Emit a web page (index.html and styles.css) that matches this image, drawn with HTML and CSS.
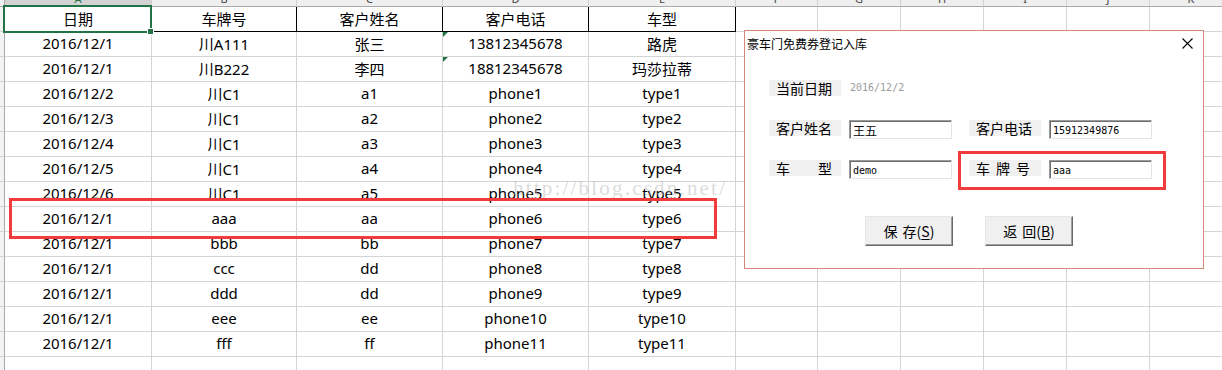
FILE: index.html
```html
<!DOCTYPE html>
<html lang="zh-CN">
<head>
<meta charset="utf-8">
<title>豪车门免费券登记入库</title>
<link rel="stylesheet" href="styles.css">
</head>
<body>
<div class="page">
  <div class="sheet">
    <div class="colhead corner"></div>
    <div class="colhead sel"><span>A</span></div>
    <div class="colhead"><span>B</span></div>
    <div class="colhead"><span>C</span></div>
    <div class="colhead"><span>D</span></div>
    <div class="colhead"><span>E</span></div>
    <div class="colhead"><span>F</span></div>
    <div class="colhead"><span>G</span></div>
    <div class="colhead"><span>H</span></div>
    <div class="colhead"><span>I</span></div>
    <div class="colhead"><span>J</span></div>
    <div class="colhead"><span>K</span></div>

    <div class="rowhead"></div>
    <div class="cell hd active">日期</div><div class="cell hd">车牌号</div><div class="cell hd">客户姓名</div><div class="cell hd">客户电话</div><div class="cell hd">车型</div>
    <div class="cell"></div><div class="cell"></div><div class="cell"></div><div class="cell"></div><div class="cell"></div><div class="cell"></div>

    <div class="rowhead"></div>
    <div class="cell">2016/12/1</div><div class="cell">川A111</div><div class="cell">张三</div><div class="cell flag">13812345678</div><div class="cell">路虎</div>
    <div class="cell"></div><div class="cell"></div><div class="cell"></div><div class="cell"></div><div class="cell"></div><div class="cell"></div>

    <div class="rowhead"></div>
    <div class="cell">2016/12/1</div><div class="cell">川B222</div><div class="cell">李四</div><div class="cell flag">18812345678</div><div class="cell">玛莎拉蒂</div>
    <div class="cell"></div><div class="cell"></div><div class="cell"></div><div class="cell"></div><div class="cell"></div><div class="cell"></div>

    <div class="rowhead"></div>
    <div class="cell">2016/12/2</div><div class="cell">川C1</div><div class="cell">a1</div><div class="cell">phone1</div><div class="cell">type1</div>
    <div class="cell"></div><div class="cell"></div><div class="cell"></div><div class="cell"></div><div class="cell"></div><div class="cell"></div>

    <div class="rowhead"></div>
    <div class="cell">2016/12/3</div><div class="cell">川C1</div><div class="cell">a2</div><div class="cell">phone2</div><div class="cell">type2</div>
    <div class="cell"></div><div class="cell"></div><div class="cell"></div><div class="cell"></div><div class="cell"></div><div class="cell"></div>

    <div class="rowhead"></div>
    <div class="cell">2016/12/4</div><div class="cell">川C1</div><div class="cell">a3</div><div class="cell">phone3</div><div class="cell">type3</div>
    <div class="cell"></div><div class="cell"></div><div class="cell"></div><div class="cell"></div><div class="cell"></div><div class="cell"></div>

    <div class="rowhead"></div>
    <div class="cell">2016/12/5</div><div class="cell">川C1</div><div class="cell">a4</div><div class="cell">phone4</div><div class="cell">type4</div>
    <div class="cell"></div><div class="cell"></div><div class="cell"></div><div class="cell"></div><div class="cell"></div><div class="cell"></div>

    <div class="rowhead"></div>
    <div class="cell">2016/12/6</div><div class="cell">川C1</div><div class="cell">a5</div><div class="cell">phone5</div><div class="cell">type5</div>
    <div class="cell"></div><div class="cell"></div><div class="cell"></div><div class="cell"></div><div class="cell"></div><div class="cell"></div>

    <div class="rowhead"></div>
    <div class="cell">2016/12/1</div><div class="cell">aaa</div><div class="cell">aa</div><div class="cell">phone6</div><div class="cell">type6</div>
    <div class="cell"></div><div class="cell"></div><div class="cell"></div><div class="cell"></div><div class="cell"></div><div class="cell"></div>

    <div class="rowhead"></div>
    <div class="cell">2016/12/1</div><div class="cell">bbb</div><div class="cell">bb</div><div class="cell">phone7</div><div class="cell">type7</div>
    <div class="cell"></div><div class="cell"></div><div class="cell"></div><div class="cell"></div><div class="cell"></div><div class="cell"></div>

    <div class="rowhead"></div>
    <div class="cell">2016/12/1</div><div class="cell">ccc</div><div class="cell">dd</div><div class="cell">phone8</div><div class="cell">type8</div>
    <div class="cell"></div><div class="cell"></div><div class="cell"></div><div class="cell"></div><div class="cell"></div><div class="cell"></div>

    <div class="rowhead"></div>
    <div class="cell">2016/12/1</div><div class="cell">ddd</div><div class="cell">dd</div><div class="cell">phone9</div><div class="cell">type9</div>
    <div class="cell"></div><div class="cell"></div><div class="cell"></div><div class="cell"></div><div class="cell"></div><div class="cell"></div>

    <div class="rowhead"></div>
    <div class="cell">2016/12/1</div><div class="cell">eee</div><div class="cell">ee</div><div class="cell">phone10</div><div class="cell">type10</div>
    <div class="cell"></div><div class="cell"></div><div class="cell"></div><div class="cell"></div><div class="cell"></div><div class="cell"></div>

    <div class="rowhead"></div>
    <div class="cell">2016/12/1</div><div class="cell">fff</div><div class="cell">ff</div><div class="cell">phone11</div><div class="cell">type11</div>
    <div class="cell"></div><div class="cell"></div><div class="cell"></div><div class="cell"></div><div class="cell"></div><div class="cell"></div>

    <div class="rowhead"></div>
    <div class="cell"></div><div class="cell"></div><div class="cell"></div><div class="cell"></div><div class="cell"></div>
    <div class="cell"></div><div class="cell"></div><div class="cell"></div><div class="cell"></div><div class="cell"></div><div class="cell"></div>
  </div>

  <div class="watermark">http://blog.csdn.net/</div>
  <div class="mark row-mark"></div>

  <div class="dialog">
    <div class="titlebar">
      <span class="title">豪车门免费券登记入库</span>
      <svg class="close" width="11" height="11" viewBox="0 0 11 11"><path d="M0.5 0.5 L10.5 10.5 M10.5 0.5 L0.5 10.5" stroke="#000" stroke-width="1.1" fill="none"/></svg>
    </div>
    <div class="form">
      <div class="frow">
        <span class="label">当前日期</span>
        <span class="date">2016/12/2</span>
      </div>
      <div class="frow">
        <span class="label">客户姓名</span>
        <span class="input cjk">王五</span>
        <span class="label second">客户电话</span>
        <span class="input">15912349876</span>
      </div>
      <div class="frow">
        <span class="label wide">车<span class="gap2"></span>型</span>
        <span class="input">demo</span>
        <span class="label second spaced">车牌号</span>
        <span class="input">aaa</span>
      </div>
      <div class="buttons">
        <span class="btn"><span class="sp">保</span>存(<u>S</u>)</span>
        <span class="btn"><span class="sp">返</span>回(<u>B</u>)</span>
      </div>
    </div>
    <div class="mark dlg-mark"></div>
  </div>
</div>
</body>
</html>
```

FILE: styles.css
```css
html, body {
  margin: 0;
  padding: 0;
  background: #fff;
}
.page {
  position: relative;
  width: 1222px;
  height: 370px;
  overflow: hidden;
  font-family: "Noto Sans", "Noto Sans CJK SC", sans-serif;
}
.sheet {
  display: grid;
  grid-template-columns: 5px 147px 145px 146px 146px 147px 82px 83px 83px 83px 83px 83px;
  grid-template-rows: 7px repeat(15, 25px);
  width: 1233px;
}
.colhead {
  box-sizing: border-box;
  background: #efefef;
  border-right: 1px solid #d2d2d2;
  border-bottom: 1px solid #a9a9a9;
  overflow: hidden;
  text-align: center;
  color: #444;
  font-size: 11px;
}
.colhead span {
  display: block;
  line-height: 10px;
  margin-top: -6px;
}
.colhead.corner {
  border-right-color: #a9a9a9;
}
.colhead.sel {
  background: #d3d3d3;
  color: #217346;
  border-bottom: 1px solid #217346;
}
.rowhead {
  box-sizing: border-box;
  background: #f3f3f3;
  border-right: 1px solid #a9a9a9;
  border-bottom: 1px solid #d4d4d4;
}
.cell {
  box-sizing: border-box;
  border-right: 1px solid #d4d4d4;
  border-bottom: 1px solid #d4d4d4;
  display: flex;
  align-items: center;
  justify-content: center;
  font-size: 15px;
  color: #000;
  white-space: nowrap;
  padding-bottom: 2px;
}
.cell.hd {
  border-right-color: #000;
  border-bottom-color: #000;
  padding-bottom: 1px;
}
.cell.active {
  position: relative;
  border-right-color: transparent;
}
.cell.active::after {
  content: "";
  position: absolute;
  left: -2px;
  top: -2px;
  right: -1px;
  bottom: -2px;
  border: 2px solid #217346;
}
.cell.active::before {
  content: "";
  position: absolute;
  right: -3px;
  bottom: -4px;
  width: 5px;
  height: 5px;
  background: #217346;
  border: 1px solid #fff;
  z-index: 2;
}
.cell.flag {
  position: relative;
}
.cell.flag::before {
  content: "";
  position: absolute;
  left: 0;
  top: 0;
  border-top: 5px solid #217346;
  border-right: 5px solid transparent;
}
.watermark {
  position: absolute;
  left: 513px;
  top: 176px;
  font-family: "Liberation Serif", serif;
  font-size: 21px;
  letter-spacing: 2.2px;
  color: rgba(185, 185, 185, 0.5);
  white-space: nowrap;
}
.mark {
  position: absolute;
  box-sizing: border-box;
  border: 3px solid #f23c3c;
}
.row-mark {
  left: 9px;
  top: 198px;
  width: 708px;
  height: 41px;
}
.dialog {
  position: absolute;
  left: 744px;
  top: 30px;
  width: 460px;
  height: 239px;
  box-sizing: border-box;
  border: 1px solid #d6877a;
  background: #fff;
  font-family: "Noto Sans CJK SC", sans-serif;
}
.titlebar {
  height: 25px;
  display: flex;
  align-items: center;
  justify-content: space-between;
  padding: 0 10px 0 2px;
}
.title {
  font-size: 12px;
  color: #000;
  line-height: 14px;
}
.form {
  padding: 24px 0 0 24px;
}
.frow {
  display: flex;
  align-items: flex-start;
  height: 19px;
  margin-bottom: 21px;
}
.label {
  width: 72px;
  height: 16px;
  background: #f0f0f0;
  font-size: 14px;
  line-height: 16px;
  color: #000;
  box-sizing: border-box;
  padding-left: 7px;
  margin-right: 8px;
  white-space: nowrap;
  display: flex;
}
.label .gap2 {
  width: 28px;
}
.label.spaced {
  letter-spacing: 6px;
}
.label.second {
  margin-left: 17px;
}
.date {
  font-family: "DejaVu Sans Mono", monospace;
  font-size: 10px;
  color: #9a9a9a;
  line-height: 16px;
  padding-left: 1px;
}
.input {
  box-sizing: border-box;
  width: 103px;
  height: 19px;
  border: 1px solid;
  border-color: #9a9a9a #e3e3e3 #e3e3e3 #9a9a9a;
  box-shadow: inset 1px 1px 0 #6d6d6d;
  font-family: "DejaVu Sans Mono", monospace;
  font-size: 10px;
  line-height: 17px;
  padding-left: 3px;
  padding-top: 1px;
  color: #000;
}
.input.cjk {
  font-family: "Noto Sans CJK SC", sans-serif;
  font-size: 12px;
}
.buttons {
  display: flex;
  gap: 32px;
  padding-left: 96px;
  margin-top: 37px;
}
.btn {
  box-sizing: border-box;
  width: 88px;
  height: 30px;
  background: #f0f0f0;
  border: 1px solid;
  border-color: #e6e6e6 #6a6a6a #6a6a6a #e6e6e6;
  box-shadow: inset -1px -1px 0 #a0a0a0;
  display: flex;
  align-items: center;
  justify-content: center;
  font-size: 14px;
  color: #000;
  white-space: nowrap;
}
.btn .sp {
  margin-right: 5px;
}
.btn u {
  text-underline-offset: 2px;
}
.dlg-mark {
  left: 213px;
  top: 120px;
  width: 208px;
  height: 39px;
}
```
